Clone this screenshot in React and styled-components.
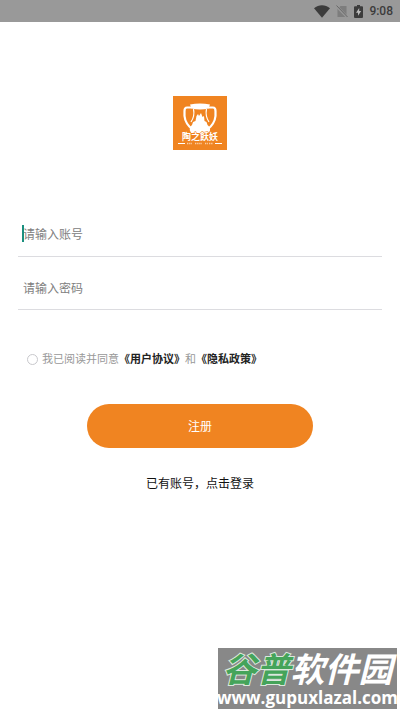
import React, { useState } from 'react';
import styled, { createGlobalStyle } from 'styled-components';

const GlobalStyle = createGlobalStyle`
    * {
        box-sizing: border-box;
    }

    body {
        margin: 0;
        background: #fff;
        font-family: "Noto Sans", "Noto Sans CJK SC", sans-serif;
    }
`

const Page = styled.div`
    position: relative;
    display: flex;
    flex-direction: column;
    min-height: 100vh;
    overflow: hidden;
`

const StatusBar = styled.header`
    display: flex;
    align-items: center;
    justify-content: flex-end;
    gap: 6px;
    height: 22px;
    padding: 0 7px;
    background: #999;
`

const Clock = styled.time`
    color: #3c3c3c;
    font: 500 12px/22px Roboto, sans-serif;
`

const Main = styled.main`
    display: flex;
    flex-direction: column;
    align-items: center;
    padding: 74px 18px 0;
`

const Form = styled.form`
    display: flex;
    flex-direction: column;
    width: 100%;
    padding-top: 60px;
`

const Field = styled.label`
    position: relative;
    display: flex;
    align-items: center;
    height: ${props => props.$first ? '47px' : '53px'};
    padding-top: ${props => props.$first ? '0' : '8px'};
    border-bottom: 1px solid #dcdce0;
`

const Input = styled.input`
    width: 100%;
    height: 100%;
    padding: 0 5px;
    border: 0;
    outline: 0;
    background: none;
    color: #333;
    caret-color: transparent;
    font: 12px/18px "Noto Sans CJK SC", sans-serif;

    &::placeholder {
        color: #808080;
        opacity: 1;
    }
`

const Caret = styled.span`
    position: absolute;
    left: 4px;
    width: 2px;
    height: 17px;
    background: #1a8f7e;
`

const Consent = styled.div`
    display: flex;
    align-items: center;
    padding: 40px 9px 0;
    color: #999;
    font-size: 11px;
    line-height: 18px;
    white-space: nowrap;
`

const Radio = styled.input`
    appearance: none;
    width: 11px;
    height: 11px;
    margin: 0 4px 0 0;
    border: 1px solid #c8c8cc;
    border-radius: 50%;

    &:checked {
        background: #f08421;
    }
`

const PolicyLink = styled.a`
    color: #222;
    font-weight: 700;
    text-decoration: none;
`

const Submit = styled.button`
    align-self: center;
    width: 62%;
    height: 44px;
    margin-top: 36px;
    border: 0;
    border-radius: 22px;
    background: #f08421;
    color: #fff;
    font: 12px/18px "Noto Sans CJK SC", sans-serif;
`

const LoginLink = styled.a`
    margin-top: 27px;
    color: #111;
    font-size: 12px;
    line-height: 18px;
    text-decoration: none;
`

const Watermark = styled.aside`
    position: absolute;
    right: 3px;
    bottom: 3px;
    display: flex;
    flex-direction: column;
    align-items: center;
    width: 179px;
    height: 61px;
    background: #888;
    color: #fff;
    white-space: nowrap;
`

const SiteName = styled.strong`
    font: italic 700 34px/40px "Noto Sans CJK SC", sans-serif;
`

const Green = styled.span`
    color: #45a45a;
    -webkit-text-stroke: 2px #dce8de;
    paint-order: stroke fill;
`

const SiteUrl = styled.span`
    font: 700 17px/20px "Open Sans", sans-serif;
`

const WifiIcon = () => (
    <svg width="16" height="13" viewBox="0 0 16 13" aria-hidden="true">
        <path d="M0 3.2C4.6-.8 11.4-.8 16 3.2L8 12.8Z" fill="#3c3c3c" />
    </svg>
)

const NoSimIcon = () => (
    <svg width="12" height="13" viewBox="0 0 12 13" aria-hidden="true">
        <path d="M4.5 1H10.5V12H1.5V4Z" fill="#7d7d7d" />
        <path d="M.5 1.2 11.5 12.5" stroke="#999" strokeWidth="2.4" />
        <path d="M.5.5 11.5 12" stroke="#686868" strokeWidth="1" />
    </svg>
)

const BatteryIcon = () => (
    <svg width="9" height="13" viewBox="0 0 9 13" aria-hidden="true">
        <path d="M3 0h3v1.3h2q1 0 1 1V12q0 1-1 1H1q-1 0-1-1V2.3q0-1 1-1h2Z" fill="#3c3c3c" />
        <path d="M5.2 3 2 7.7h2v3.1l3.2-4.7h-2Z" fill="#bbb" />
    </svg>
)

//vase with two handles above the brand name
const Logo = () => (
    <svg width="54" height="54" viewBox="0 0 54 54" role="img" aria-label="陶之飫妖">
        <rect width="54" height="54" fill="#f08421" />
        <path d="M19 11.5H14Q11.5 11.5 11.5 15V20C12 26 15 30 20 34M35 11.5H40Q42.500 11.5 42.500 15V20C42 26 39 30 34 34" fill="none" stroke="#fff" strokeWidth="2.2" />
        <path d="M17 8.5Q27 6.5 37 8.5L35.5 12.500Q27 14.500 18.500 12.500Z" fill="#fff" />
        <path d="M20.500 13Q22 20 18 26M33.500 13Q32 20 36 26" fill="none" stroke="#fff" strokeWidth="1.2" />
        <path d="M23.5 20l1.500-2 1 2 2-3 1.5 4 1.5-1 .5 5 2 1 1 3 2 2Q38 34 36 37H18Q16 34 17 31l2-2 1-3 2.5-1Z" fill="#fff" />
        <text x="27" y="44" textAnchor="middle" fill="#fff" stroke="#f08421" strokeWidth="1" paintOrder="stroke" fontFamily="Noto Sans CJK SC, sans-serif" fontSize="9" fontWeight="700">陶之飫妖</text>
        <path d="M5 47.5h7M42 47.5h7" stroke="#fff" strokeWidth="1" />
        <path d="M14 47.5h5M22 47.5h7M32 47.5h3M36 47.5h4" stroke="#f9cda5" strokeWidth="1.4" strokeDasharray="1.4 .7" />
    </svg>
)

const App = () => {
    const [account, setAccount] = useState('');
    const [password, setPassword] = useState('');

    return (
        <Page>
            <GlobalStyle />
            <StatusBar>
                <WifiIcon />
                <NoSimIcon />
                <BatteryIcon />
                <Clock>9:08</Clock>
            </StatusBar>
            <Main>
                <Logo />
                <Form onSubmit={e => e.preventDefault()}>
                    <Field $first>
                        <Caret />
                        <Input aria-label="账号" placeholder="请输入账号" value={account} onChange={e => setAccount(e.target.value)} />
                    </Field>
                    <Field>
                        <Input type="password" aria-label="密码" placeholder="请输入密码" value={password} onChange={e => setPassword(e.target.value)} />
                    </Field>
                    <Consent>
                        <Radio type="radio" id="agree" name="agree" />
                        <label htmlFor="agree">我已阅读并同意</label>
                        <PolicyLink href="#terms">《用户协议》</PolicyLink>
                        和
                        <PolicyLink href="#privacy">《隐私政策》</PolicyLink>
                    </Consent>
                    <Submit type="submit">注册</Submit>
                </Form>
                <LoginLink href="#login">已有账号，点击登录</LoginLink>
            </Main>
            <Watermark>
                <SiteName><Green>谷普</Green>软件园</SiteName>
                <SiteUrl>www.gupuxlazal.com</SiteUrl>
            </Watermark>
        </Page>
    );
}

export default App;
